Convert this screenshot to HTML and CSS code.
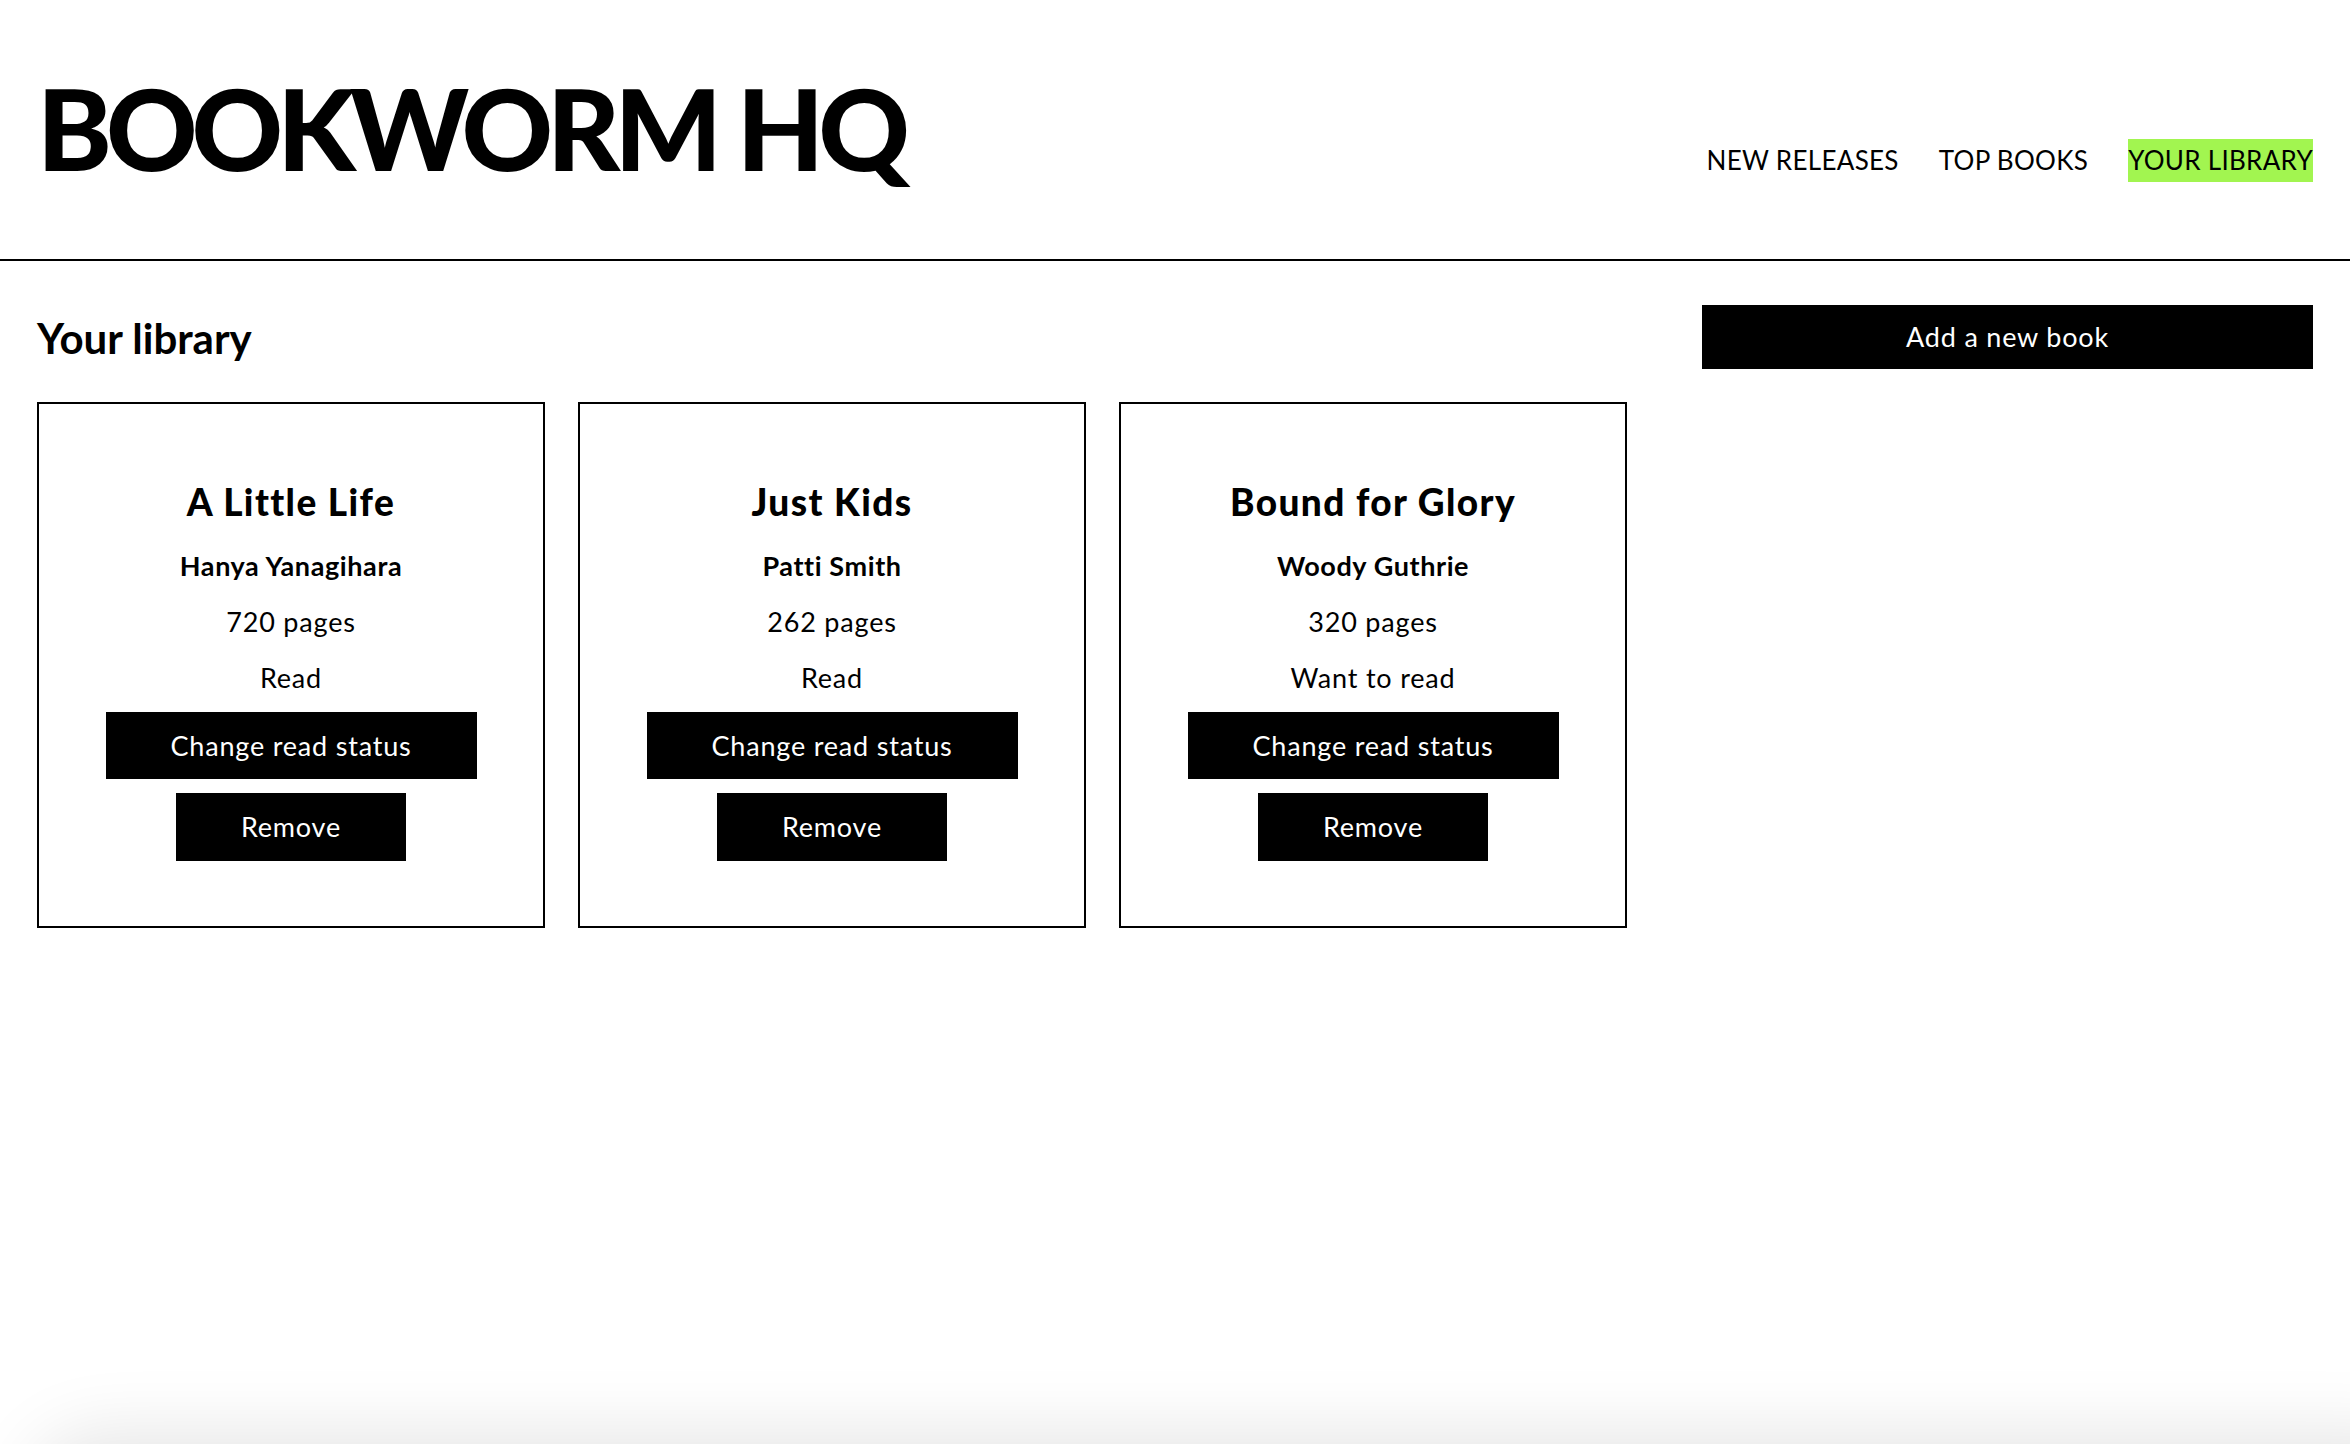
FILE: index.html
```html
<!DOCTYPE html>
<html lang="en">
<head>
<meta charset="utf-8">
<title>Bookworm HQ</title>
<link rel="stylesheet" href="styles.css">
</head>
<body>
<header class="site-header">
  <h1 class="brand">BOOKWORM HQ</h1>
  <nav class="nav">
    <a class="nav-link" href="#">NEW RELEASES</a>
    <a class="nav-link" href="#">TOP BOOKS</a>
    <a class="nav-link nav-link--active" href="#">YOUR LIBRARY</a>
  </nav>
</header>
<main class="page">
  <section class="library">
    <h2 class="library-title">Your library</h2>
    <div class="cards">
      <article class="card">
        <h3 class="card-title">A Little Life</h3>
        <p class="card-author">Hanya Yanagihara</p>
        <p class="card-text">720 pages</p>
        <p class="card-text">Read</p>
        <button class="btn btn--status">Change read status</button>
        <button class="btn btn--remove">Remove</button>
      </article>
      <article class="card">
        <h3 class="card-title">Just Kids</h3>
        <p class="card-author">Patti Smith</p>
        <p class="card-text">262 pages</p>
        <p class="card-text">Read</p>
        <button class="btn btn--status">Change read status</button>
        <button class="btn btn--remove">Remove</button>
      </article>
      <article class="card">
        <h3 class="card-title">Bound for Glory</h3>
        <p class="card-author">Woody Guthrie</p>
        <p class="card-text">320 pages</p>
        <p class="card-text">Want to read</p>
        <button class="btn btn--status">Change read status</button>
        <button class="btn btn--remove">Remove</button>
      </article>
    </div>
  </section>
  <aside class="actions">
    <button class="btn btn--add">Add a new book</button>
  </aside>
</main>
<div class="screen-shadow"></div>
</body>
</html>
```

FILE: styles.css
```css
* {
  box-sizing: border-box;
}

html, body {
  margin: 0;
  padding: 0;
  background: #ffffff;
  color: #000000;
  font-family: "Lato", "Liberation Sans", sans-serif;
}

body {
  min-height: 1444px;
  overflow: hidden;
}

.site-header {
  display: flex;
  justify-content: space-between;
  align-items: flex-end;
  padding: 71px 37px 75px 37px;
  border-bottom: 2px solid #000;
}

.brand {
  margin: 0;
  font-size: 113px;
  line-height: 113px;
  font-weight: 900;
  letter-spacing: -6px;
}

.nav {
  display: flex;
  gap: 40px;
  margin-bottom: 2px;
}

.nav-link {
  display: block;
  font-size: 26px;
  line-height: 43px;
  color: #000;
  text-decoration: none;
  font-weight: 400;
  letter-spacing: 0.3px;
}

.nav-link--active {
  background: #a2f550;
}

.page {
  display: flex;
  justify-content: space-between;
  padding: 44px 37px 0 37px;
}

.library-title {
  margin: 8px 0 39px 0;
  font-size: 42px;
  line-height: 50px;
  font-weight: 700;
}

.cards {
  display: grid;
  grid-template-columns: repeat(3, 508px);
  gap: 33px;
}

.card {
  display: flex;
  flex-direction: column;
  align-items: center;
  border: 2px solid #000;
  padding: 70px 0 65px 0;
  text-align: center;
}

.card-title {
  margin: 0 0 8px 0;
  font-size: 37px;
  line-height: 56px;
  font-weight: 900;
  letter-spacing: 1.4px;
}

.card-author {
  margin: 0;
  font-size: 27px;
  line-height: 56px;
  font-weight: 700;
  letter-spacing: 0.6px;
}

.card-text {
  margin: 0;
  font-size: 27px;
  line-height: 56px;
  font-weight: 400;
  letter-spacing: 0.8px;
}

.btn {
  display: block;
  border: 0;
  background: #000;
  color: #fff;
  font-family: "Lato", "Liberation Sans", sans-serif;
  font-size: 27px;
  font-weight: 400;
  letter-spacing: 0.8px;
  padding: 0 65px;
  cursor: pointer;
}

.btn--status {
  height: 67px;
  line-height: 67px;
  margin-top: 6px;
}

.btn--remove {
  height: 68px;
  line-height: 68px;
  margin-top: 14px;
}

.actions {
  width: 611px;
}

.btn--add {
  width: 100%;
  height: 64px;
  line-height: 64px;
  padding: 0;
}

.screen-shadow {
  position: fixed;
  left: 40px;
  right: -80px;
  top: 100%;
  height: 200px;
  border-radius: 60px;
  background: #fff;
  box-shadow: 0 0 70px 12px rgba(0, 0, 0, 0.1);
}
```
